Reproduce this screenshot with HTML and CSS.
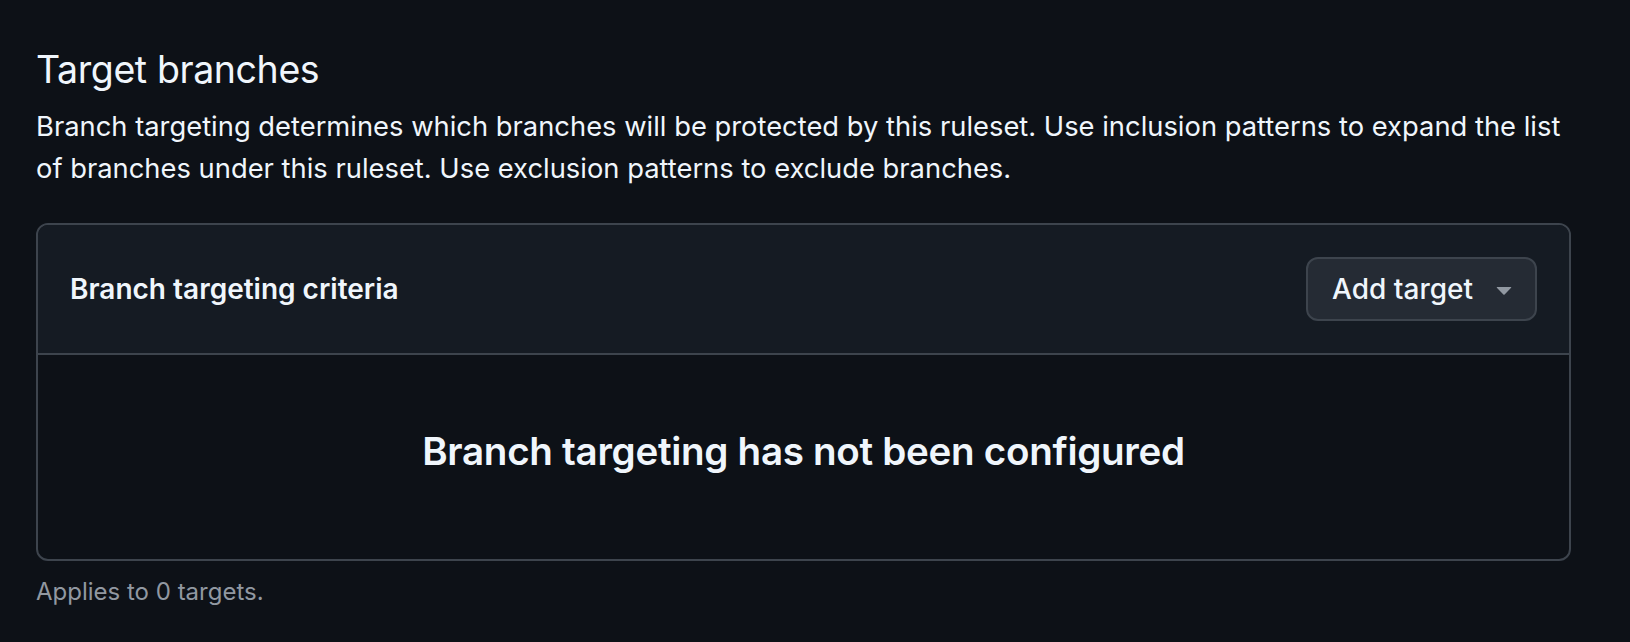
FILE: index.html
```html
<!DOCTYPE html>
<html lang="en">
<head>
<meta charset="utf-8">
<title>Target branches</title>
<link rel="stylesheet" href="styles.css">
</head>
<body>
<main class="page">
  <h2 class="title">Target branches</h2>
  <p class="desc">Branch targeting determines which branches will be protected by this ruleset. Use inclusion patterns to expand the list of branches under this ruleset. Use exclusion patterns to exclude branches.</p>
  <section class="box">
    <header class="box-header">
      <h3 class="box-title">Branch targeting criteria</h3>
      <button class="btn" type="button">
        <span>Add target</span>
        <svg class="caret" width="16" height="16" viewBox="0 0 16 16" aria-hidden="true"><path d="m4.427 7.427 3.396 3.396a.25.25 0 0 0 .354 0l3.396-3.396A.25.25 0 0 0 11.396 7H4.604a.25.25 0 0 0-.177.427Z" fill="currentColor"/></svg>
      </button>
    </header>
    <div class="box-body">
      <p class="empty">Branch targeting has not been configured</p>
    </div>
  </section>
  <p class="note">Applies to 0 targets.</p>
</main>
</body>
</html>
```
FILE: styles.css
```css
html, body {
  margin: 0;
  padding: 0;
  background: #0d1117;
}
body {
  font-family: Inter, "Noto Sans", "Liberation Sans", sans-serif;
  color: #f0f6fc;
}
.page {
  padding: 40px 59px 0 36px;
}
.title {
  margin: 0;
  font-size: 37.5px;
  line-height: 60px;
  font-weight: 400;
  letter-spacing: -0.4px;
}
.desc {
  margin: 6px 0 0;
  font-size: 27.35px;
  line-height: 42px;
  font-weight: 400;
}
.box {
  margin-top: 33px;
  border: 2px solid #3d444d;
  border-radius: 12px;
  overflow: hidden;
}
.box-header {
  display: flex;
  align-items: center;
  justify-content: space-between;
  padding: 32px;
  background: #151b23;
  border-bottom: 2px solid #3d444d;
}
.box-title {
  margin: 0;
  font-size: 28px;
  line-height: 42px;
  font-weight: 600;
}
.btn {
  display: flex;
  align-items: center;
  gap: 15px;
  height: 64px;
  padding: 0 15px 0 24px;
  background: #252b34;
  border: 2px solid #3d444d;
  border-radius: 12px;
  color: #f0f6fc;
  font-family: inherit;
  font-size: 28px;
  font-weight: 500;
}
.caret {
  width: 32px;
  height: 32px;
  color: #9198a1;
}
.box-body {
  padding: 68px 32px 80px;
}
.empty {
  margin: 0;
  text-align: center;
  font-size: 38.6px;
  line-height: 56px;
  font-weight: 600;
  letter-spacing: -0.3px;
}
.note {
  margin: 13px 0 0;
  font-size: 24px;
  line-height: 36px;
  color: #9198a1;
}
```
